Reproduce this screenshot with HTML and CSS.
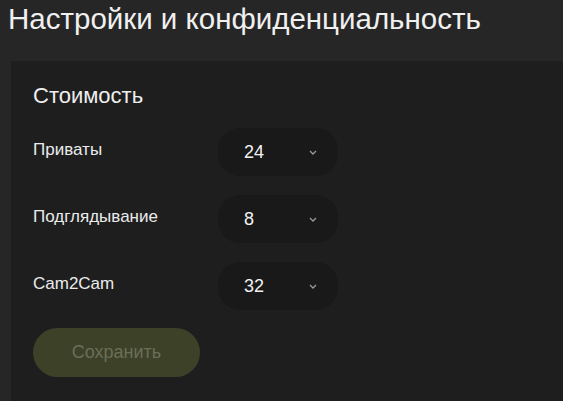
FILE: index.html
```html
<!DOCTYPE html>
<html lang="ru">
<head>
<meta charset="utf-8">
<link rel="stylesheet" href="styles.css">
</head>
<body>
<h1 class="page-title">Настройки и конфиденциальность</h1>
<section class="card">
  <h2 class="card-title">Стоимость</h2>
  <div class="rows">
    <div class="row">
      <span class="label">Приваты</span>
      <div class="select"><span class="value">24</span><svg class="chev" width="8" height="5" viewBox="0 0 8 5"><polyline points="1,1 4,4 7,1" fill="none" stroke="#9a9a9a" stroke-width="1.3"/></svg></div>
    </div>
    <div class="row">
      <span class="label">Подглядывание</span>
      <div class="select"><span class="value">8</span><svg class="chev" width="8" height="5" viewBox="0 0 8 5"><polyline points="1,1 4,4 7,1" fill="none" stroke="#9a9a9a" stroke-width="1.3"/></svg></div>
    </div>
    <div class="row">
      <span class="label">Cam2Cam</span>
      <div class="select"><span class="value">32</span><svg class="chev" width="8" height="5" viewBox="0 0 8 5"><polyline points="1,1 4,4 7,1" fill="none" stroke="#9a9a9a" stroke-width="1.3"/></svg></div>
    </div>
  </div>
  <button class="save">Сохранить</button>
</section>
</body>
</html>
```

FILE: styles.css
```css
html, body {
  margin: 0;
  padding: 0;
  height: 100%;
  overflow: hidden;
}
body {
  background: #262626;
  font-family: "Liberation Sans", Arial, sans-serif;
  color: #ececec;
}
.page-title {
  margin: 0;
  padding: 3px 0 0 8px;
  font-size: 29.5px;
  font-weight: normal;
  line-height: 32px;
  height: 61px;
  box-sizing: border-box;
  color: #f0f0f0;
  white-space: nowrap;
}
.card {
  margin-left: 11px;
  background: #1e1e1e;
  height: 340px;
  padding: 23px 22px;
  box-sizing: border-box;
}
.card-title {
  margin: 0;
  font-size: 22px;
  font-weight: normal;
  line-height: 24px;
  color: #eeeeee;
}
.rows {
  margin-top: 20px;
  display: flex;
  flex-direction: column;
  gap: 19px;
}
.row {
  display: flex;
  align-items: center;
  height: 48px;
}
.label {
  width: 185px;
  font-size: 17px;
  margin-top: -4px;
  color: #ebebeb;
}
.select {
  width: 120px;
  height: 48px;
  border-radius: 22px;
  background: #19191a;
  display: flex;
  align-items: center;
  padding: 0 21px 0 26px;
  box-sizing: border-box;
  justify-content: space-between;
}
.value {
  font-size: 18px;
  color: #f2f2f2;
  margin-top: 1px;
}
.chev {
  display: block;
  margin-top: 1px;
}
.save {
  margin-top: 18px;
  width: 167px;
  height: 49px;
  border: none;
  border-radius: 25px;
  background: #3c4128;
  color: #6b6f57;
  font-family: "Liberation Sans", Arial, sans-serif;
  font-size: 18px;
  padding: 0;
}
```
